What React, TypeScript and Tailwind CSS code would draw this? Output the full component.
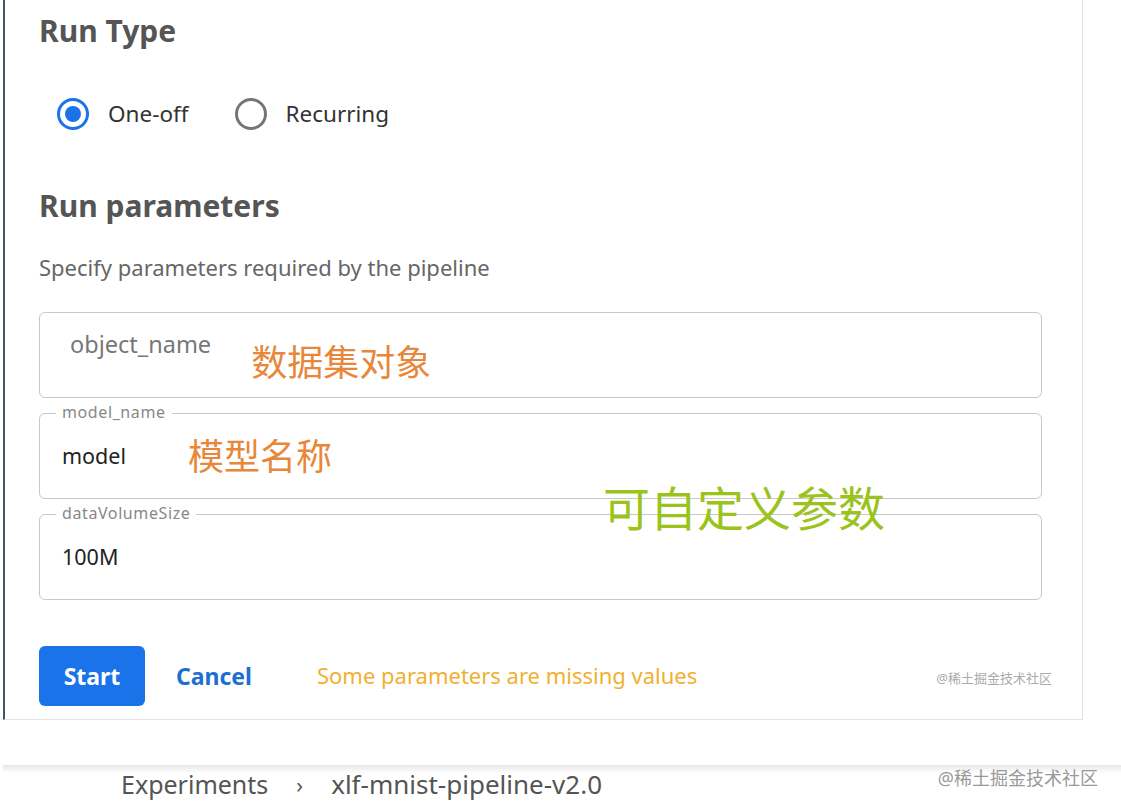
import React from "react";

const sans = "font-['Noto_Sans','Noto_Sans_CJK_SC',sans-serif]";

function Radio(props: { label: string; checked?: boolean }) {
    return (
        <label className="flex items-center gap-[19px]">
            {props.checked ? (
                <span className="w-8 h-8 rounded-full border-[3px] border-[#1a73e8] flex items-center justify-center">
                    <span className="w-4 h-4 rounded-full bg-[#1a73e8]"/>
                </span>
            ) : (
                <span className="w-8 h-8 rounded-full border-[3px] border-[#757575]"/>
            )}
            <span className="text-[22.5px] text-[#333]">{props.label}</span>
        </label>
    );
}

function Field(props: { label?: string; value?: string; placeholder?: string; note?: React.ReactNode }) {
    return (
        <div className="relative h-[86px] border border-[#c8c8c8] rounded-md flex items-center px-[22px]">
            {props.label && (
                <span className="absolute -top-[12px] left-[16px] px-[6px] bg-white text-[16px] tracking-[0.6px] leading-5 text-[#888]">
                    {props.label}
                </span>
            )}
            {props.placeholder ? (
                <span className="text-[23.5px] text-[#777] ml-[8px] -mt-[20px]">{props.placeholder}</span>
            ) : (
                <span className="text-[21.5px] text-[#222]">{props.value}</span>
            )}
            {props.note}
        </div>
    );
}

export default function App() {
    return (
        <div className={`w-[1121px] h-[807px] bg-white overflow-hidden ${sans}`}>
            <div className="ml-[3px] w-[1080px] h-[720px] border-l-2 border-l-[#3b5670] border-r border-r-[#e4e4e4] border-b border-b-[#e4e4e4] pl-[34px] pr-[40px] pt-[11px] relative">
                <h2 className="text-[30px] font-bold text-[#555] leading-10">Run Type</h2>
                <div className="flex gap-[46px] mt-[46px] ml-[18px]">
                    <Radio label="One-off" checked/>
                    <Radio label="Recurring"/>
                </div>
                <h2 className="text-[30px] font-bold text-[#555] leading-10 mt-[55px]">Run parameters</h2>
                <p className="text-[22px] text-[#666] mt-[25px]">Specify parameters required by the pipeline</p>
                <div className="flex flex-col gap-[15px] mt-[28px]">
                    <Field placeholder="object_name" note={
                        <span className="ml-[40px] mt-[16px] text-[36px] text-[#e8873a]">数据集对象</span>
                    }/>
                    <Field label="model_name" value="model" note={
                        <span className="ml-[62px] mt-[2px] text-[36px] text-[#e8873a]">模型名称</span>
                    }/>
                    <Field label="dataVolumeSize" value="100M"/>
                </div>
                <span className="absolute left-[598px] top-[480px] text-[47px] text-[#9ac31c] leading-[56px]">可自定义参数</span>
                <div className="flex items-center mt-[46px]">
                    <button className="w-[106px] h-[60px] rounded-md bg-[#1a73e8] text-white text-[23px] font-bold">Start</button>
                    <button className="ml-[31px] text-[23px] font-bold text-[#1a6fd0]">Cancel</button>
                    <span className="ml-[65px] text-[22px] text-[#f0b030]">Some parameters are missing values</span>
                    <span className="ml-auto mr-[-10px] mt-[6px] text-[13px] text-[#aaa]">@稀土掘金技术社区</span>
                </div>
            </div>
            <div className="mt-[45px] h-[8px] bg-gradient-to-b from-[#e6e6e6] to-white ml-[3px]"/>
            <div className="flex items-center justify-between pl-[121px] pr-[23px] -mt-[8px]">
                <div className="flex items-center text-[#555]">
                    <span className="text-[25px]">Experiments</span>
                    <span className="mx-[28px] text-[22px]">›</span>
                    <span className="text-[26px]">xlf-mnist-pipeline-v2.0</span>
                </div>
                <span className="text-[18px] text-[#999] -mt-[12px]">@稀土掘金技术社区</span>
            </div>
        </div>
    );
}
